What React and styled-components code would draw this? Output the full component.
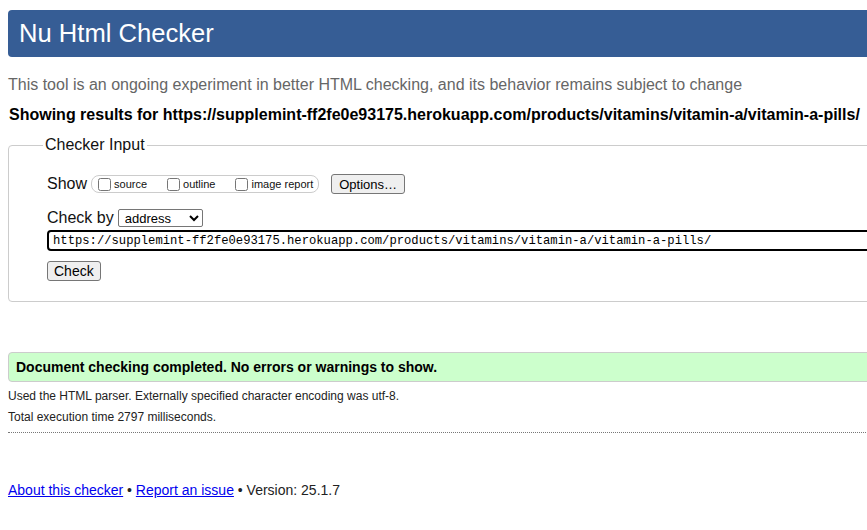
import React from "react";
import styled, { createGlobalStyle } from "styled-components";

const GlobalStyle = createGlobalStyle`
  html, body {
    margin: 0;
    padding: 0;
    overflow: hidden;
    background: #fff;
  }
  body {
    font-family: "Liberation Sans", Arial, sans-serif;
    color: #111;
  }
`;

const Page = styled.div`
  width: 1100px;
  padding: 10px 0 0 8px;
`;

const Header = styled.h1`
  margin: 0;
  height: 47px;
  display: flex;
  align-items: center;
  padding-left: 11px;
  background: #365d95;
  border-radius: 4px;
  color: #fff;
  font-size: 25.6px;
  font-weight: 400;
`;

const Intro = styled.p`
  margin: 19px 0 0 0;
  font-size: 16px;
  line-height: 18px;
  color: #666;
`;

const Results = styled.p`
  margin: 12px 0 0 1px;
  font-size: 16px;
  line-height: 18px;
  font-weight: 700;
  color: #000;
`;

const Fieldset = styled.fieldset`
  margin: 12px 0 0 0;
  padding: 0 0 20px 38px;
  border: 1px solid #ccc;
  border-radius: 4px;
  display: flex;
  flex-direction: column;
`;

const Legend = styled.legend`
  margin-left: -4px;
  padding: 0 2px;
  font-size: 16px;
  line-height: 18px;
  color: #111;
`;

const Row = styled.div`
  display: flex;
  align-items: center;
  margin-top: ${({ $gap }) => $gap}px;
  font-size: 16px;
`;

const Label = styled.span`
  margin-right: 4px;
`;

const Options = styled.fieldset`
  display: flex;
  align-items: center;
  margin: 0;
  padding: 0 5px 0 6px;
  height: 16px;
  border: 1px solid #ccc;
  border-radius: 8px;
`;

const Opt = styled.label`
  display: flex;
  align-items: center;
  font-size: 11px;
  margin-right: ${({ $last }) => ($last ? 0 : 20)}px;

  input {
    margin: 0 3px 0 0;
    width: 13px;
    height: 13px;
  }
`;

const Button = styled.button`
  font-family: "Liberation Sans", Arial, sans-serif;
  font-size: ${({ $size }) => $size}px;
  height: ${({ $h }) => $h}px;
  padding: 0 ${({ $px }) => $px || 6}px;
  margin-left: ${({ $ml }) => $ml || 0}px;
  background: #efefef;
  border: 1px solid #767676;
  border-radius: 3px;
  color: #000;
`;

const Select = styled.select`
  width: 85px;
  height: 18px;
  font-family: "Liberation Sans", Arial, sans-serif;
  font-size: 13px;
  border: 1px solid #767676;
  border-radius: 2px;
  background: #fff;
  color: #000;
  padding: 0 0 0 2px;
`;

const UrlInput = styled.input`
  box-sizing: border-box;
  width: 1100px;
  height: 21px;
  margin-top: 3px;
  padding: 0 4px;
  border: 2px solid #000;
  border-radius: 4px;
  font-family: "Liberation Mono", "DejaVu Sans Mono", monospace;
  font-size: 12.2px;
  color: #000;
  outline: none;
`;

const Success = styled.div`
  margin-top: 50px;
  height: 28px;
  display: flex;
  align-items: center;
  padding-left: 7px;
  background: #ccffcc;
  border: 1px solid #ccc;
  border-radius: 4px;
  font-size: 14px;
  font-weight: 700;
  color: #000;
`;

const Note = styled.p`
  margin: ${({ $mt }) => $mt}px 0 0 0;
  font-size: 12px;
  line-height: 14px;
  color: #222;
`;

const Rule = styled.hr`
  margin: 8px 0 0 0;
  border: 0;
  border-top: 1px dotted #777;
`;

const Footer = styled.p`
  margin: 49px 0 0 0;
  font-size: 14px;
  line-height: 16px;
  color: #222;

  a {
    color: #0000ee;
    text-decoration: underline;
  }
`;

const url =
  "https://supplemint-ff2fe0e93175.herokuapp.com/products/vitamins/vitamin-a/vitamin-a-pills/";

export default function App() {
  return (
    <Page>
      <GlobalStyle />
      <Header>Nu Html Checker</Header>
      <Intro>
        This tool is an ongoing experiment in better HTML checking, and its behavior remains
        subject to change
      </Intro>
      <Results>Showing results for {url}</Results>

      <Fieldset>
        <Legend>Checker Input</Legend>
        <Row $gap={20}>
          <Label>Show</Label>
          <Options>
            <Opt>
              <input type="checkbox" />
              source
            </Opt>
            <Opt>
              <input type="checkbox" />
              outline
            </Opt>
            <Opt $last>
              <input type="checkbox" />
              image report
            </Opt>
          </Options>
          <Button $size={13} $h={20} $ml={12} $px={7}>
            Options…
          </Button>
        </Row>
        <Row $gap={15}>
          <Label>Check by</Label>
          <Select defaultValue="address">
            <option value="address">address</option>
            <option value="file">file upload</option>
            <option value="text">text input</option>
          </Select>
        </Row>
        <UrlInput type="text" defaultValue={url} />
        <Row $gap={10}>
          <Button $size={14} $h={20}>
            Check
          </Button>
        </Row>
      </Fieldset>

      <Success>Document checking completed. No errors or warnings to show.</Success>
      <Note $mt={7}>
        Used the HTML parser. Externally specified character encoding was utf-8.
      </Note>
      <Note $mt={7}>Total execution time 2797 milliseconds.</Note>
      <Rule />

      <Footer>
        <a href="#about">About this checker</a> • <a href="#issue">Report an issue</a> •
        Version: 25.1.7
      </Footer>
    </Page>
  );
}
